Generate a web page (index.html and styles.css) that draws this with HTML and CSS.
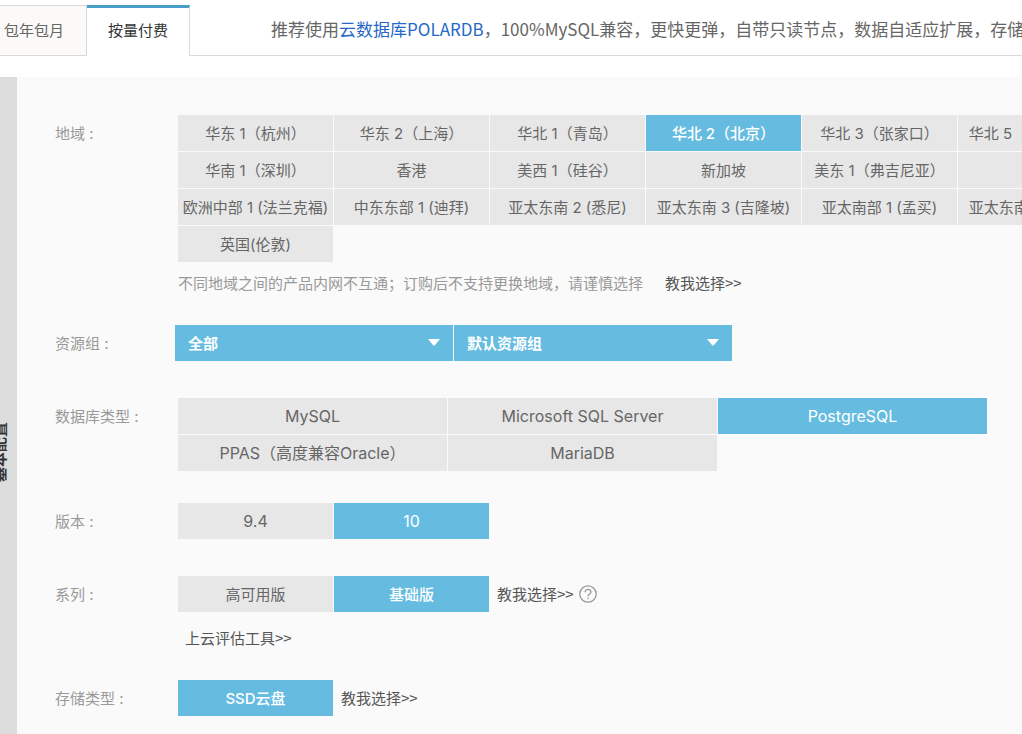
FILE: index.html
```html
<!DOCTYPE html>
<html lang="zh-CN">
<head>
<meta charset="utf-8">
<title>云数据库购买</title>
<link rel="stylesheet" href="styles.css">
</head>
<body>
<header class="top">
  <nav class="tabs">
    <button class="tab" type="button">包年包月</button>
    <button class="tab tab-active" type="button">按量付费</button>
  </nav>
  <p class="promo">推荐使用<a href="#polardb">云数据库POLARDB</a>，100%MySQL兼容，更快更弹，自带只读节点，数据自适应扩展，存储三副本</p>
</header>
<main class="panel">
  <aside class="side"><span class="side-text">基本配置</span></aside>
  <div class="form">
    <section class="row row-note">
      <h2 class="label">地域 :</h2>
      <div class="field">
        <div class="options options-region">
          <button class="option" type="button">华东 1（杭州）</button>
          <button class="option" type="button">华东 2（上海）</button>
          <button class="option" type="button">华北 1（青岛）</button>
          <button class="option selected" type="button">华北 2（北京）</button>
          <button class="option" type="button">华北 3（张家口）</button>
          <button class="option" type="button">华北 5（呼和浩特）</button>
          <button class="option" type="button">华南 1（深圳）</button>
          <button class="option" type="button">香港</button>
          <button class="option" type="button">美西 1（硅谷）</button>
          <button class="option" type="button">新加坡</button>
          <button class="option" type="button">美东 1（弗吉尼亚）</button>
          <button class="option" type="button" aria-label="其他地域"></button>
          <button class="option" type="button">欧洲中部 1 (法兰克福)</button>
          <button class="option" type="button">中东东部 1 (迪拜)</button>
          <button class="option" type="button">亚太东南 2 (悉尼)</button>
          <button class="option" type="button">亚太东南 3 (吉隆坡)</button>
          <button class="option" type="button">亚太南部 1 (孟买)</button>
          <button class="option" type="button">亚太东南 5 (雅加达)</button>
          <button class="option" type="button">英国(伦敦)</button>
        </div>
        <p class="note">不同地域之间的产品内网不互通；订购后不支持更换地域，请谨慎选择<a class="link" href="#region-help">教我选择&gt;&gt;</a></p>
      </div>
    </section>

    <section class="row">
      <h2 class="label">资源组 :</h2>
      <div class="selects">
        <div class="select-box">
          <select class="select" aria-label="资源组范围"><option>全部</option></select>
          <svg class="arrow" viewBox="0 0 12 7" aria-hidden="true"><path d="M0 0H12L7 6Q6 7 5 6Z"/></svg>
        </div>
        <div class="select-box">
          <select class="select" aria-label="资源组"><option>默认资源组</option></select>
          <svg class="arrow" viewBox="0 0 12 7" aria-hidden="true"><path d="M0 0H12L7 6Q6 7 5 6Z"/></svg>
        </div>
      </div>
    </section>

    <section class="row row-db">
      <h2 class="label">数据库类型 :</h2>
      <div class="options options-db">
        <button class="option" type="button">MySQL</button>
        <button class="option" type="button">Microsoft SQL Server</button>
        <button class="option selected" type="button">PostgreSQL</button>
        <button class="option" type="button">PPAS（高度兼容Oracle）</button>
        <button class="option" type="button">MariaDB</button>
      </div>
    </section>

    <section class="row">
      <h2 class="label">版本 :</h2>
      <div class="options options-version">
        <button class="option" type="button">9.4</button>
        <button class="option selected" type="button">10</button>
      </div>
    </section>

    <section class="row row-note">
      <h2 class="label">系列 :</h2>
      <div class="field">
        <div class="line">
          <div class="options">
            <button class="option" type="button">高可用版</button>
            <button class="option selected" type="button">基础版</button>
          </div>
          <a class="link" href="#series-help">教我选择&gt;&gt;</a>
          <svg class="help" viewBox="0 0 18 18" aria-hidden="true"><circle cx="9" cy="9" r="8.2"/><path d="M6.2 7.2C6.2 5.4 7.4 4.4 9 4.4S11.9 5.5 11.9 7C11.9 9 9.1 9.1 9.1 11.4M9.1 12.8V14.2"/></svg>
        </div>
        <p class="tool"><a class="link" href="#assessment">上云评估工具&gt;&gt;</a></p>
      </div>
    </section>

    <section class="row">
      <h2 class="label">存储类型 :</h2>
      <div class="line">
        <div class="options">
          <button class="option selected" type="button">SSD云盘</button>
        </div>
        <a class="link" href="#storage-help">教我选择&gt;&gt;</a>
      </div>
    </section>
  </div>
</main>
</body>
</html>
```
FILE: styles.css
```css
* { box-sizing: border-box; }

body {
  margin: 0;
  overflow: hidden;
  background: #fff;
  color: #666;
  font: 15px/16px Inter, "Noto Sans CJK SC", sans-serif;
  white-space: nowrap;
}

button, select { font: inherit; color: inherit; }
p, h2 { margin: 0; }
a { text-decoration: none; }

.top {
  display: flex;
  height: 56px;
  padding-top: 5px;
  border-bottom: 1px solid #d9d9d9;
}

.tabs { display: flex; margin-bottom: -1px; }

.tab {
  padding: 0 22px 0 4px;
  border: 1px solid #d9d9d9;
  border-left: 0;
  background: #fbfaf8;
}

.tab-active {
  padding: 0 21px 2px 21px;
  border-top: 3px solid #4a9fc9;
  border-bottom: 0;
  background: #fff;
  color: #333;
}

.promo {
  margin-left: 81px;
  font-family: "Noto Sans CJK SC", sans-serif;
  font-size: 17px;
  line-height: 48px;
}

.promo a { color: #2468c8; }

.panel {
  display: flex;
  min-height: 750px;
  margin: 21px 0 0 -17px;
  background: #fafafa;
}

.side {
  display: flex;
  flex: 0 0 34px;
  align-items: center;
  justify-content: center;
  background: #ddd;
}

.side-text {
  color: #333;
  font-weight: 700;
  writing-mode: vertical-rl;
  text-orientation: sideways;
  transform: rotate(180deg);
}

.form { flex: 1; min-width: 0; padding: 38px 0 0 38px; }

.row { display: flex; margin-bottom: 37px; }
.row-note { margin-bottom: 33px; }
.row-db { margin-bottom: 32px; }

.label {
  flex: 0 0 123px;
  height: 36px;
  color: #999;
  font-size: 15px;
  font-weight: 400;
  line-height: 37px;
}

.options {
  display: grid;
  grid-auto-columns: 155px;
  grid-auto-rows: 36px;
  grid-auto-flow: column;
  gap: 1px;
}

.options-region { grid-template-columns: repeat(6, 155px); grid-auto-flow: row; }
.options-db { grid-template-columns: repeat(3, 269px); grid-auto-flow: row; }

.option {
  padding: 1px 0 0;
  border: 0;
  background: #e7e7e7;
}

.option.selected {
  background: #66bce0;
  color: #fff;
  font-weight: 500;
}

.options-db .option,
.options-version .option { padding: 0; font-size: 16px; font-weight: 400; }

.note { padding-top: 13px; color: #999; }
.note .link { margin-left: 22px; }
.link { color: #555; font-family: "Noto Sans CJK SC", sans-serif; }

.selects { display: flex; gap: 1px; margin-left: -3px; }
.select-box { position: relative; width: 278px; }

.select {
  appearance: none;
  width: 100%;
  height: 36px;
  padding: 1px 36px 0 13px;
  border: 0;
  border-radius: 0;
  background: #66bce0;
  color: #fff;
  font-weight: 700;
}

.arrow {
  position: absolute;
  top: 14px;
  right: 13px;
  width: 12px;
  height: 7px;
  fill: #fff;
  pointer-events: none;
}

.line { display: flex; align-items: center; }
.line .link { margin-left: 8px; }

.help {
  width: 18px;
  height: 18px;
  margin-left: 5px;
  fill: none;
  stroke: #999;
  stroke-width: 1.3;
}

.tool { padding: 18px 0 0 7px; }
```
